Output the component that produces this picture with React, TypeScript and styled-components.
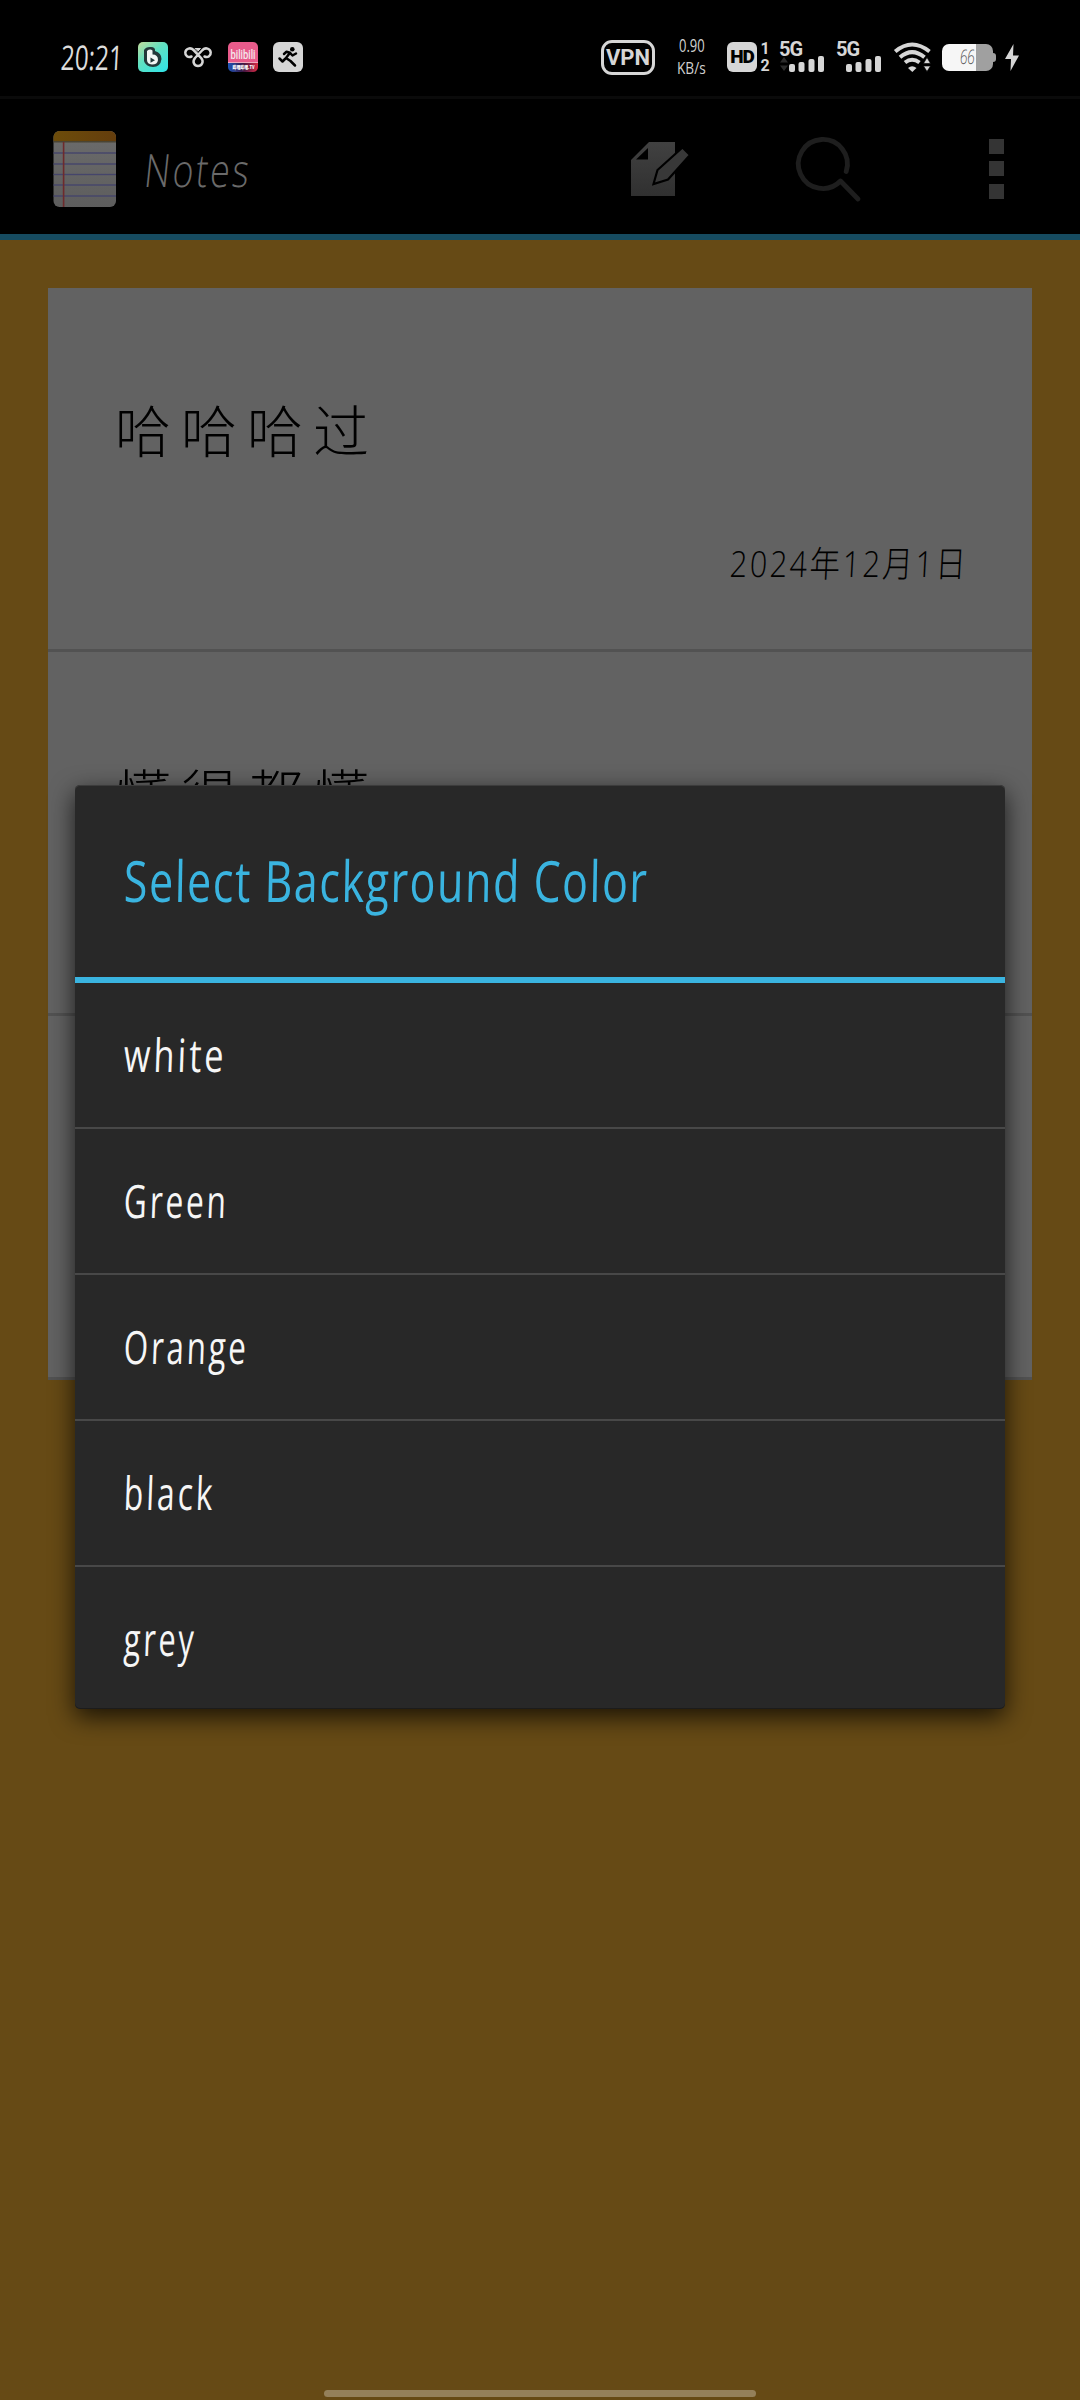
import React, { useLayoutEffect, useRef, useState } from "react";
import styled, { createGlobalStyle } from "styled-components";

const Global = createGlobalStyle`
  html, body { margin: 0; padding: 0; background: #664a15; }
  * { box-sizing: border-box; }
  svg { display: block; flex: none; overflow: visible; }
`;

const HAND = `"Open Sans", "Noto Sans", "Noto Sans CJK SC", sans-serif`;

/* ---------- narrow text squeezed to a fixed measure ---------- */
const FitBox = styled.span<{ $w: number }>`
  display: block;
  width: ${(p) => p.$w}px;
  flex: none;
  white-space: nowrap;
`;
const FitInner = styled.span<{ $size: number; $weight: number; $color: string; $lh: number; $track: number }>`
  display: inline-block;
  font-family: ${HAND};
  font-size: ${(p) => p.$size}px;
  font-weight: ${(p) => p.$weight};
  line-height: ${(p) => p.$lh}px;
  letter-spacing: ${(p) => p.$track}px;
  margin-right: ${(p) => -p.$track}px;
  color: ${(p) => p.$color};
  transform-origin: 0 50%;
  vertical-align: top;
`;
type FitProps = {
  w: number;
  size: number;
  lh: number;
  color: string;
  weight?: number;
  track?: number;
  slant?: number;
  children: string;
};
function FitText({ w, size, lh, color, weight = 300, track = 0, slant = 0, children }: FitProps) {
  const ref = useRef<HTMLSpanElement>(null);
  const [sx, setSx] = useState(1);
  useLayoutEffect(() => {
    if (ref.current) setSx(w / (ref.current.offsetWidth - track));
  }, [w, track, children]);
  return (
    <FitBox $w={w}>
      <FitInner
        ref={ref}
        $size={size}
        $lh={lh}
        $color={color}
        $weight={weight}
        $track={track}
        style={{ transform: `skewX(${-slant}deg) scaleX(${sx})` }}
      >
        {children}
      </FitInner>
    </FitBox>
  );
}

/* ---------- page ---------- */
const Screen = styled.div`
  position: relative;
  width: 1080px;
  height: 2400px;
  overflow: hidden;
  display: flex;
  flex-direction: column;
  background: #664a15;
`;
const StatusBar = styled.header`
  flex: none;
  height: 99px;
  background: #000;
  border-bottom: 3px solid #0a0a0a;
  padding: 18px 61px 0 61px;
  display: flex;
  align-items: center;
  justify-content: space-between;
`;
const StatusGroup = styled.div<{ $gap: number }>`
  display: flex;
  align-items: center;
  gap: ${(p) => p.$gap}px;
  height: 44px;
`;
const Rate = styled.div`
  display: flex;
  flex-direction: column;
  align-items: center;
  gap: 5px;
  margin: 0 21px 0 22px;
`;
const Vpn = styled.div`
  width: 54px;
  height: 35px;
  border: 3px solid #d6d6d6;
  border-radius: 11px;
  display: flex;
  align-items: center;
  justify-content: center;
  font: 700 22px/29px Roboto, sans-serif;
  color: #d6d6d6;
`;
const HdBadge = styled.div`
  width: 30px;
  height: 30px;
  border-radius: 6px;
  background: #d6d6d6;
  color: #000;
  display: flex;
  align-items: center;
  justify-content: center;
  font: 900 19px/30px Roboto, sans-serif;
  letter-spacing: -1px;
`;
const SimDigits = styled.div`
  display: flex;
  flex-direction: column;
  align-items: center;
  width: 12px;
  margin: 0 9px 0 2px;
  font: 700 16px/17px Roboto, sans-serif;
  color: #d6d6d6;
`;
const Cell = styled.div`
  display: flex;
  flex-direction: column;
  width: 45px;
  height: 30px;
  margin-right: 12px;
`;
const CellLabel = styled.div`
  font: 700 20px/14px Roboto, sans-serif;
  height: 14px;
  color: #d6d6d6;
  letter-spacing: -1px;
  margin-left: -1px;
`;
const Battery = styled.div`
  width: 51px;
  height: 27px;
  border-radius: 7px;
  background: linear-gradient(90deg, #f6f6f6 34px, #a0a0a0 34px);
  display: flex;
  align-items: center;
  padding-left: 18px;
`;
const BatteryTip = styled.div`
  width: 3px;
  height: 9px;
  border-radius: 0 3px 3px 0;
  background: #a0a0a0;
  margin-right: 9px;
`;
const AppBar = styled.nav`
  height: 141px;
  flex: none;
  background: #000;
  border-bottom: 6px solid #164b60;
  display: flex;
  align-items: center;
  padding: 4px 76px 0 53px;
`;
const Spacer = styled.div`
  flex: 1;
`;
const ActionSlot = styled.div<{ $mr: number }>`
  margin-right: ${(p) => p.$mr}px;
`;
const MoreDots = styled.div`
  display: flex;
  flex-direction: column;
  gap: 7.5px;
`;
const Dot = styled.i`
  width: 15px;
  height: 15px;
  background: #343434;
`;
const NoteList = styled.main`
  margin: 48px 48px 0;
  display: flex;
  flex-direction: column;
`;
const Note = styled.article`
  height: 364px;
  background: #626262;
  border-bottom: 3px solid #525252;
  padding: 100px 66px 0 67px;
  display: flex;
  flex-direction: column;
`;
const NoteTitle = styled.h2`
  margin: 0;
  font: 300 56px/80px "Noto Sans CJK SC", sans-serif;
  letter-spacing: 10px;
  color: #000;
  height: 151px;
`;
const NoteDate = styled.div`
  align-self: flex-end;
  height: 50px;
`;
const HomeBar = styled.div`
  position: absolute;
  left: 324px;
  top: 2390px;
  width: 432px;
  height: 7px;
  border-radius: 4px;
  background: #94805a;
`;

/* ---------- dialog ---------- */
const Dialog = styled.section`
  position: absolute;
  left: 75px;
  top: 785px;
  width: 930px;
  height: 924px;
  border-radius: 5px;
  overflow: hidden;
  background: #282828;
  box-shadow: 0 8px 24px rgba(0, 0, 0, 0.75), inset 0 1px 0 #3c3c3c, inset 0 -1px 0 #1c1c1c;
`;
const DialogTitle = styled.div`
  height: 198px;
  border-bottom: 6px solid #3ab4e0;
  padding: 55px 0 0 49px;
`;
const Option = styled.div`
  height: 146px;
  border-bottom: 2px solid #484848;
  padding: 36px 0 0 49px;
  &:last-child {
    border-bottom: 0;
  }
`;

/* ---------- drawings ---------- */
const AppB = () => (
  <svg width="30" height="30" viewBox="0 0 30 30">
    <defs>
      <linearGradient id="bg" x1="0" y1="0" x2="0.8" y2="1">
        <stop offset="0" stopColor="#c3dc9c" />
        <stop offset="0.45" stopColor="#62e0c0" />
        <stop offset="1" stopColor="#35e3e3" />
      </linearGradient>
    </defs>
    <rect width="30" height="30" rx="5" fill="url(#bg)" />
    <path d="M6 8Q8 4.500 13 5Q17.500 5 17 9Q23.500 11 23.500 17Q22.500 25 15 25Q7.500 24.500 6 19Z" fill="#23383a" />
    <path d="M9 9Q12 6.500 14.500 8.500V12.500Q20 12.500 20 18Q19.500 22.500 14 22.500Q9 22 9 18Z" fill="#f2f6f5" />
    <path d="M12.500 15.500l4.500 2.700-4.500 2.500z" fill="#23383a" />
  </svg>
);
const Knot = () => (
  <svg width="30" height="22" viewBox="0 0 30 22" fill="none" stroke="#d6d6d6" strokeWidth="2.500" strokeLinecap="round" strokeLinejoin="round">
    <path d="M8.500 10.500C5 12 2 9.500 2.300 6.300C2.800 2.500 7.500 1 10.500 4L18 11.800C21.500 16 18.500 20 15 20C11.500 20 8.800 16 12 12L19.500 4C22.500 1 27.200 2.500 27.700 6.300C28 9.500 25 12 21.500 10.500" />
    <path d="M12.500 2.500h5l-2.500 2.500z" strokeWidth="1" fill="#d6d6d6" />
  </svg>
);
const Bili = () => (
  <svg width="30" height="30" viewBox="0 0 30 30">
    <defs>
      <clipPath id="bc"><rect width="30" height="30" rx="5" /></clipPath>
      <linearGradient id="bl" x1="0" x2="1">
        <stop offset="0" stopColor="#1d55b8" />
        <stop offset="0.5" stopColor="#391642" />
        <stop offset="1" stopColor="#dd2b45" />
      </linearGradient>
    </defs>
    <g clipPath="url(#bc)">
      <rect width="30" height="21" fill="#e85b8b" />
      <rect y="20.500" width="30" height="10" fill="url(#bl)" />
      <rect y="20" width="30" height="1" fill="#f0a8bd" />
    </g>
    <text x="2.500" y="17" fontFamily="Roboto, sans-serif" fontSize="12" fontWeight="500" fill="#f4e6ea" textLength="25" lengthAdjust="spacingAndGlyphs">bilibili</text>
    <text x="4.500" y="26.500" fontFamily="Noto Sans CJK SC, sans-serif" fontSize="5" fontWeight="900" fill="#fff" textLength="22" lengthAdjust="spacingAndGlyphs">哔哩哔哩.TV</text>
  </svg>
);
const Runner = () => (
  <svg width="30" height="30" viewBox="0 0 30 30">
    <rect width="30" height="30" rx="6" fill="#d6d6d6" />
    <circle cx="19.300" cy="7.300" r="2.300" fill="#000" />
    <path d="M11 12L13.500 9.800L17 10.800L13 16L17.500 19L22 23.500M17 10.800L19.500 13.500L23 11.500M12.500 16.500L9.500 19.500L6.500 16.500" fill="none" stroke="#000" strokeWidth="2.500" strokeLinecap="round" strokeLinejoin="round" />
  </svg>
);
const Bars = ({ arrows }: { arrows?: boolean }) => (
  <svg width="45" height="16" viewBox="0 0 45 16">
    {arrows && <path d="M0 6.500L4 1l4 5.500zM0 9.500h8l-4 5.500z" fill="#2c2c2c" />}
    <g fill="#d6d6d6">
      <rect x="9" y="8" width="6" height="8" rx="2" />
      <rect x="18.500" y="6" width="6" height="10" rx="2" />
      <rect x="28.500" y="3" width="6" height="13" rx="2" />
      <rect x="38" y="0" width="6" height="16" rx="2" />
    </g>
  </svg>
);
const WifiSvg = styled.svg`
  margin-right: 11px;
`;
const Wifi = () => (
  <WifiSvg width="37" height="30" viewBox="0 0 37 30">
    <g fill="none" stroke="#d6d6d6" strokeWidth="4">
      <path d="M1.200 9.500Q18 -4.500 35.500 9.500" />
      <path d="M6 15.200Q18 5 30.500 15.200" />
      <path d="M11 20.500Q18 15 25.500 20.500" />
    </g>
    <path d="M14 26Q18 22.500 22.500 26L18.300 30z" fill="#d6d6d6" />
    <path d="M29.500 21.500l3.500-6 3.500 6zM29.500 24h7l-3.500 5.500z" fill="#d6d6d6" stroke="#000" strokeWidth="0.600" />
  </WifiSvg>
);
const Bolt = () => (
  <svg width="14" height="27" viewBox="0 0 14 27">
    <path d="M8.500 0L0 15H6L5.500 27L14 11.500H8Z" fill="#d6d6d6" />
  </svg>
);
const NotepadSvg = styled.svg`
  margin-right: 28px;
`;
const Notepad = () => (
  <NotepadSvg width="64" height="78" viewBox="0 0 64 78">
    <defs>
      <clipPath id="np"><rect x="0.500" y="1" width="62.500" height="76" rx="6" /></clipPath>
      <linearGradient id="paper" x1="0" y1="0" x2="0" y2="1">
        <stop offset="0" stopColor="#6c6c6c" />
        <stop offset="1" stopColor="#5d5d5d" />
      </linearGradient>
      <linearGradient id="band" x1="0" x2="1">
        <stop offset="0" stopColor="#6c4c0a" />
        <stop offset="1" stopColor="#643d0d" />
      </linearGradient>
    </defs>
    <g clipPath="url(#np)">
      <rect width="64" height="78" fill="url(#paper)" />
      <rect width="64" height="11" fill="url(#band)" />
      <rect y="11" width="64" height="1.500" fill="#4a4433" />
      {[23, 34, 44.500, 55, 66].map((y) => (
        <rect key={y} y={y - 0.700} width="64" height="1.400" fill="#45456b" />
      ))}
      <rect x="9.800" y="12" width="1.600" height="66" fill="#6e2a2c" />
    </g>
  </NotepadSvg>
);
const Compose = () => (
  <svg width="60" height="56" viewBox="0 0 60 56">
    <defs>
      <linearGradient id="doc" x1="0" y1="0" x2="0" y2="1">
        <stop offset="0" stopColor="#414141" />
        <stop offset="1" stopColor="#303030" />
      </linearGradient>
    </defs>
    <path d="M19 1H45V55H1V19ZM18 7L6 18.500H18Z" fillRule="evenodd" fill="url(#doc)" />
    <path d="M52.500 6.500L27.500 29L23.500 43L38 38.500L60 14Z" fill="#383838" stroke="#000" strokeWidth="2.200" />
  </svg>
);
const Search = () => (
  <svg width="64" height="64" viewBox="0 0 64 64" fill="none" stroke="#1e1e1e" strokeWidth="4.800" strokeLinecap="round" strokeLinejoin="round">
    <path d="M50.200 34.500A24.500 24.500 0 1 0 44.500 44L62 62" />
  </svg>
);

const NOTES = ["哈哈哈过", "懂得都懂", ""];
const OPTIONS: [string, number][] = [
  ["white", 100],
  ["Green", 102],
  ["Orange", 122],
  ["black", 89],
  ["grey", 70],
];

export default function App() {
  return (
    <Screen>
      <Global />
      <StatusBar>
        <StatusGroup $gap={15}>
          <FitText w={62} size={34} lh={40} color="#dcdcdc" weight={400} slant={3}>20:21</FitText>
          <AppB />
          <Knot />
          <Bili />
          <Runner />
        </StatusGroup>
        <StatusGroup $gap={0}>
          <Vpn>VPN</Vpn>
          <Rate>
            <FitText w={26} size={19} lh={17} color="#d0d0d0" weight={400}>0.90</FitText>
            <FitText w={29} size={16} lh={17} color="#d0d0d0" weight={400}>KB/s</FitText>
          </Rate>
          <HdBadge>HD</HdBadge>
          <SimDigits><span>1</span><span>2</span></SimDigits>
          <Cell><CellLabel>5G</CellLabel><Bars arrows /></Cell>
          <Cell><CellLabel>5G</CellLabel><Bars /></Cell>
          <Wifi />
          <Battery><FitText w={15} size={20} lh={26} color="#555" slant={5}>66</FitText></Battery>
          <BatteryTip />
          <Bolt />
        </StatusGroup>
      </StatusBar>
      <AppBar>
        <Notepad />
        <FitText w={104} size={46} lh={66} color="#6a6a6a" track={3} slant={6}>Notes</FitText>
        <Spacer />
        <ActionSlot $mr={106}><Compose /></ActionSlot>
        <ActionSlot $mr={129}><Search /></ActionSlot>
        <MoreDots><Dot /><Dot /><Dot /></MoreDots>
      </AppBar>
      <NoteList>
        {NOTES.map((t, i) => (
          <Note key={i}>
            <NoteTitle>{t}</NoteTitle>
            {i === 0 && (
              <NoteDate>
                <FitText w={236} size={36} lh={50} color="#000" track={3} slant={3}>2024年12月1日</FitText>
              </NoteDate>
            )}
          </Note>
        ))}
      </NoteList>
      <HomeBar />
      <Dialog>
        <DialogTitle>
          <FitText w={523} size={57} lh={80} color="#3ab4e0" track={2} slant={1} weight={400}>Select Background Color</FitText>
        </DialogTitle>
        {OPTIONS.map(([label, w]) => (
          <Option key={label}>
            <FitText w={w} size={46} lh={70} color="#f6f6f6" track={4} slant={2} weight={400}>{label}</FitText>
          </Option>
        ))}
      </Dialog>
    </Screen>
  );
}
